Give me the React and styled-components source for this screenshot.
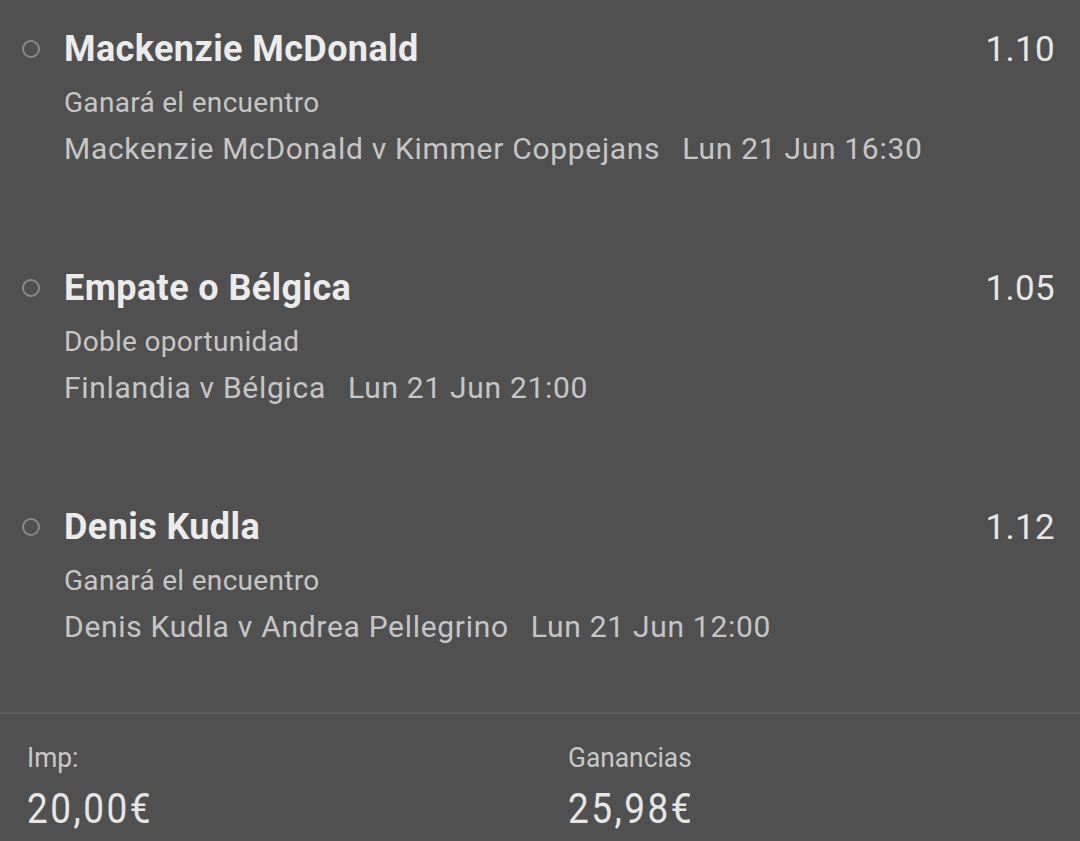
import React from 'react';
import styled, { createGlobalStyle } from 'styled-components';

const GlobalStyle = createGlobalStyle`
  html, body {
    margin: 0;
    padding: 0;
    background: #505050;
  }
  body {
    font-family: Roboto, "Liberation Sans", sans-serif;
  }
`;

const Page = styled.div`
  width: 1080px;
  height: 841px;
  background: #505050;
  overflow: hidden;
  display: flex;
  flex-direction: column;
`;

const List = styled.div`
  display: flex;
  flex-direction: column;
  gap: 98px;
  padding-top: 26px;
  height: 712px;
  box-sizing: border-box;
  overflow: hidden;
  flex-shrink: 0;
`;

const SelRow = styled.div`
  display: flex;
  align-items: flex-start;
  padding: 0 25px 0 22px;
  flex-shrink: 0;
`;

const Radio = styled.div`
  width: 14px;
  height: 14px;
  border: 2px solid #8a8a8a;
  border-radius: 50%;
  margin-top: 14px;
  flex-shrink: 0;
`;

const SelBody = styled.div`
  flex: 1;
  padding-left: 24px;
`;

const SelHead = styled.div`
  display: flex;
  justify-content: space-between;
  align-items: baseline;
`;

const SelName = styled.div`
  font-size: 36px;
  font-weight: 700;
  letter-spacing: 0.4px;
  color: #ebebeb;
  line-height: 46px;
`;

const Odds = styled.div`
  font-size: 35px;
  font-weight: 400;
  color: #e6e6e6;
  line-height: 46px;
  letter-spacing: 0.3px;
`;

const Market = styled.div`
  font-size: 28px;
  letter-spacing: 0.3px;
  color: #c6c6c6;
  line-height: 36px;
  margin-top: 12px;
`;

const EventLine = styled.div`
  font-size: 30px;
  letter-spacing: 0.7px;
  color: #c6c6c6;
  line-height: 36px;
  margin-top: 10px;
  display: flex;
  gap: 22px;
`;

const Footer = styled.div`
  border-top: 2px solid #5c5c5c;
  display: grid;
  grid-template-columns: 541px 1fr;
  padding: 27px 0 0 27px;
  flex: 1;
`;

const Stat = styled.div`
  display: flex;
  flex-direction: column;
`;

const StatLabel = styled.div`
  font-size: 28px;
  color: #c8c8c8;
  line-height: 34px;
  transform: scaleX(0.94);
  transform-origin: left center;
`;

const StatValue = styled.div`
  font-size: 42px;
  letter-spacing: 2.8px;
  color: #e6e6e6;
  line-height: 50px;
  margin-top: 9px;
  transform: scaleX(0.88);
  transform-origin: left center;
`;

const selections = [
  {
    name: 'Mackenzie McDonald',
    odds: '1.10',
    market: 'Ganará el encuentro',
    event: 'Mackenzie McDonald v Kimmer Coppejans',
    date: 'Lun 21 Jun 16:30',
  },
  {
    name: 'Empate o Bélgica',
    odds: '1.05',
    market: 'Doble oportunidad',
    event: 'Finlandia v Bélgica',
    date: 'Lun 21 Jun 21:00',
  },
  {
    name: 'Denis Kudla',
    odds: '1.12',
    market: 'Ganará el encuentro',
    event: 'Denis Kudla v Andrea Pellegrino',
    date: 'Lun 21 Jun 12:00',
  },
];

const App = () => (
  <Page>
    <GlobalStyle />
    <List>
      {selections.map((s) => (
        <SelRow key={s.name}>
          <Radio />
          <SelBody>
            <SelHead>
              <SelName>{s.name}</SelName>
              <Odds>{s.odds}</Odds>
            </SelHead>
            <Market>{s.market}</Market>
            <EventLine>
              <span>{s.event}</span>
              <span>{s.date}</span>
            </EventLine>
          </SelBody>
        </SelRow>
      ))}
    </List>
    <Footer>
      <Stat>
        <StatLabel>Imp:</StatLabel>
        <StatValue>20,00€</StatValue>
      </Stat>
      <Stat>
        <StatLabel>Ganancias</StatLabel>
        <StatValue>25,98€</StatValue>
      </Stat>
    </Footer>
  </Page>
);

export default App;
